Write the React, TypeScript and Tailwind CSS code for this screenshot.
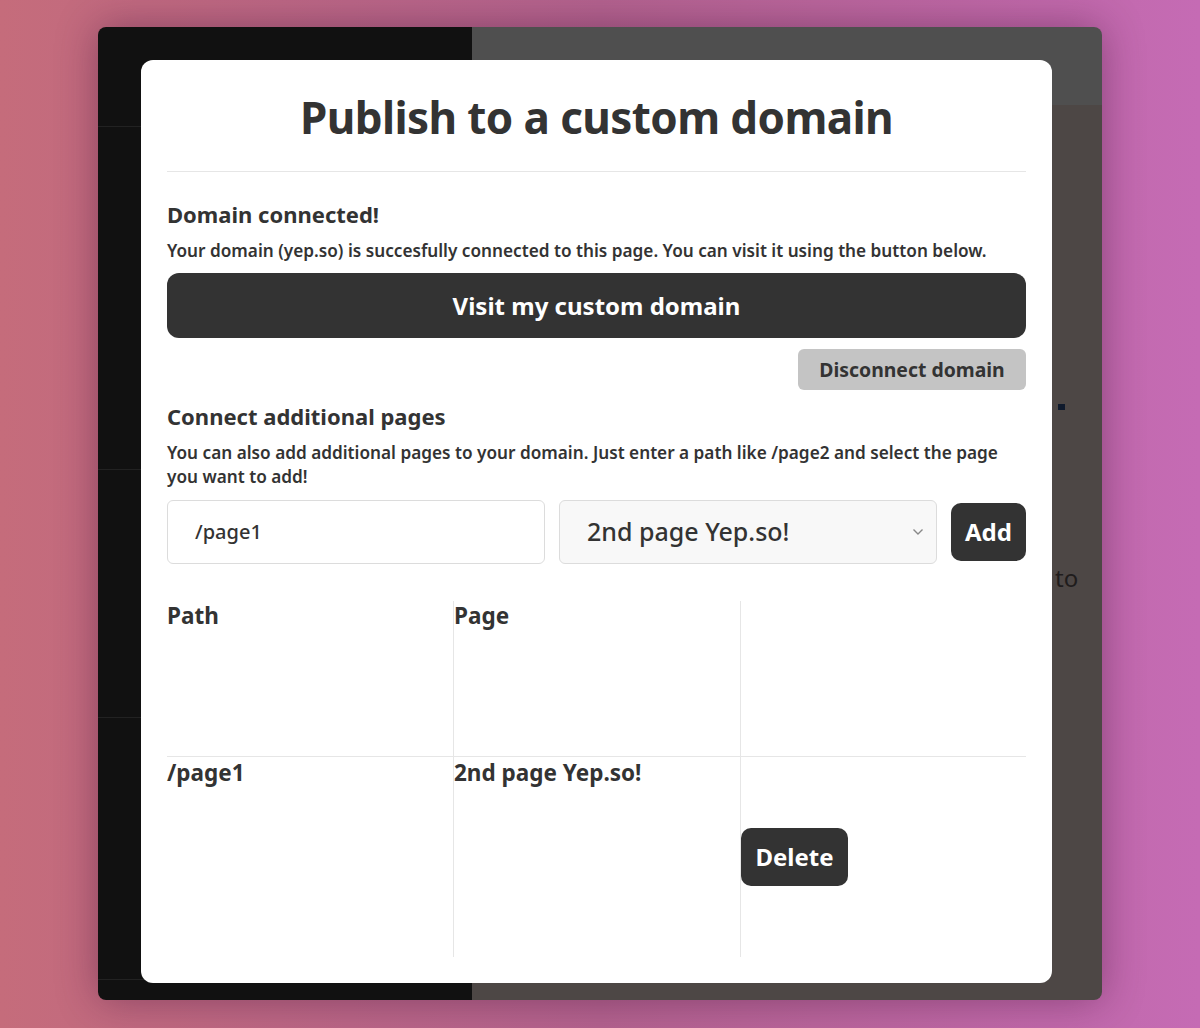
import React from "react";

const font = { fontFamily: '"Noto Sans", "Open Sans", sans-serif' };

export default function App() {
  return (
    <div
      className="w-[1200px] h-[1028px] overflow-hidden bg-linear-to-r from-[#c56c7b] via-[#b4638f] to-[#c56bb4] pt-[27px] pl-[98px]"
      style={font}
    >
      {/* app window behind the modal */}
      <div className="relative w-[1004px] h-[973px] rounded-[8px] overflow-hidden flex shadow-[0_0_40px_rgba(70,20,60,0.45)]">
        <div className="w-[374px] bg-[#111111] flex flex-col">
          <div className="h-[100px] border-b border-[#222]" />
          <div className="h-[343px] border-b border-[#222]" />
          <div className="h-[248px] border-b border-[#222]" />
          <div className="h-[262px] border-b border-[#222]" />
        </div>
        <div className="flex-1 flex flex-col">
          <div className="h-[78px] bg-[#4f4f4f]" />
          <div className="flex-1 bg-[#4d4745] flex justify-end">
            <div className="w-[47px] flex flex-col">
              <div className="mt-[299px] ml-[3px] w-[7px] h-[6px] bg-[#0f1a2c]" />
              <div className="mt-[150px] text-[24px] text-[#1f1c1c]">to</div>
            </div>
          </div>
        </div>

        {/* modal */}
        <div className="absolute left-[43px] top-[33px] w-[911px] h-[923px] bg-white rounded-[12px] px-[26px] text-[#333333]">
          <h1 className="pt-[27px] text-center text-[44px] leading-[60px] font-bold tracking-[-0.6px]">
            Publish to a custom domain
          </h1>
          <hr className="mt-[24px] border-[#e6e6e6]" />

          <h2 className="mt-[27px] text-[22px] leading-[30px] font-bold">Domain connected!</h2>
          <p className="mt-[10px] text-[17.2px] leading-[24px] font-semibold">
            Your domain (yep.so) is succesfully connected to this page. You can visit it using the button below.
          </p>
          <button className="mt-[10px] w-full h-[65px] rounded-[12px] bg-[#333333] text-white text-[24px] font-bold">
            Visit my custom domain
          </button>
          <div className="mt-[11px] flex justify-end">
            <button className="w-[228px] h-[41px] rounded-[6px] bg-[#c4c4c4] text-[#333333] text-[19.4px] font-bold">
              Disconnect domain
            </button>
          </div>

          <h2 className="mt-[11px] text-[22px] leading-[30px] font-bold">Connect additional pages</h2>
          <p className="mt-[10px] text-[17.2px] leading-[24px] font-semibold">
            You can also add additional pages to your domain. Just enter a path like /page2 and select the page you want to add!
          </p>

          <div className="mt-[11px] flex items-center gap-[14px]">
            <div className="w-[378px] h-[64px] border border-[#dcdcdc] rounded-[6px] flex items-center pl-[27px] text-[20px] font-medium">
              /page1
            </div>
            <div className="w-[378px] h-[64px] border border-[#dcdcdc] rounded-[6px] bg-[#f8f8f8] flex items-center justify-between pl-[27px] pr-[12px] text-[25px] font-medium">
              <span>2nd page Yep.so!</span>
              <svg width="12" height="8" viewBox="0 0 12 8" fill="none" stroke="#888" strokeWidth="1.4">
                <path d="M1.5 1.5 L6 6 L10.5 1.5" />
              </svg>
            </div>
            <button className="w-[75px] h-[58px] rounded-[10px] bg-[#333333] text-white text-[24px] font-bold">
              Add
            </button>
          </div>

          {/* table */}
          <div className="mt-[37px] grid grid-cols-[286px_287px_286px] text-[22.5px] leading-[30px] font-bold">
            <div className="h-[156px] border-b border-[#e6e6e6]">Path</div>
            <div className="h-[156px] border-b border-l border-[#e6e6e6]">Page</div>
            <div className="h-[156px] border-b border-l border-[#e6e6e6]" />
            <div className="h-[200px] pt-[1px]">/page1</div>
            <div className="h-[200px] pt-[1px] border-l border-[#e6e6e6]">2nd page Yep.so!</div>
            <div className="h-[200px] border-l border-[#e6e6e6] flex items-center">
              <button className="w-[107px] h-[58px] rounded-[10px] bg-[#333333] text-white text-[24px] font-bold">
                Delete
              </button>
            </div>
          </div>
        </div>
      </div>
    </div>
  );
}
